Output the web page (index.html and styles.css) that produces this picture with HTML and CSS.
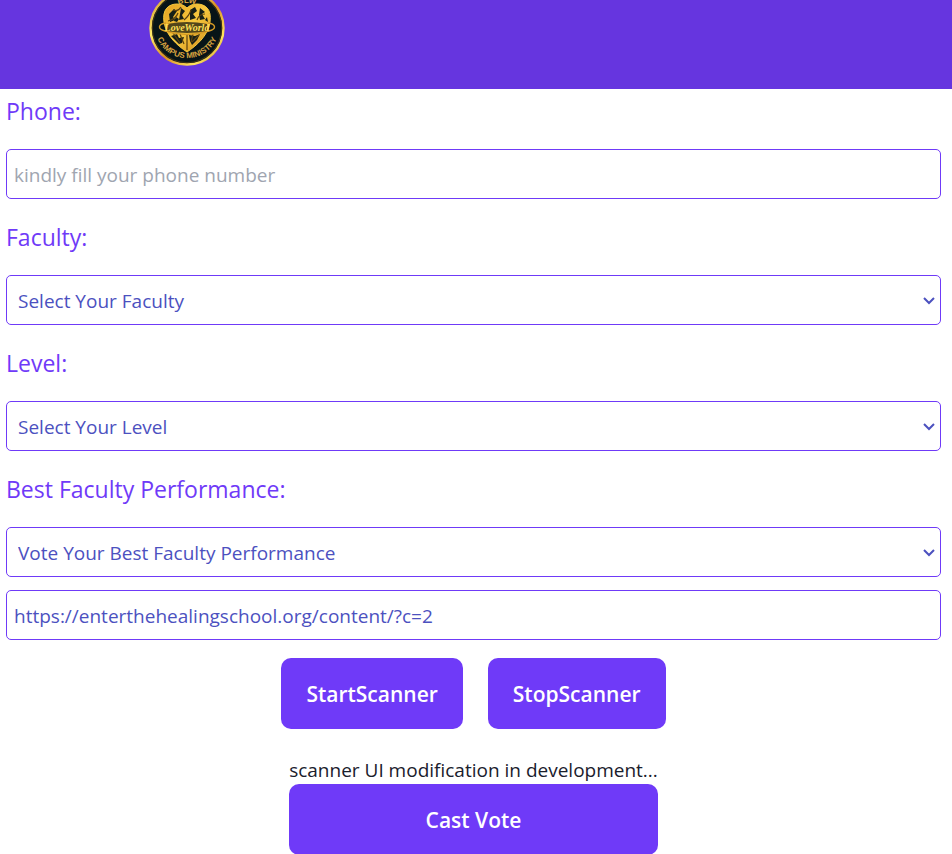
FILE: index.html
```html
<!DOCTYPE html>
<html lang="en">
<head>
<meta charset="utf-8">
<meta name="viewport" content="width=device-width, initial-scale=1">
<title>Cast Vote</title>
<link rel="stylesheet" href="styles.css">
</head>
<body>
<header class="header">
  <svg class="logo" viewBox="0 0 76 76" role="img" aria-label="BLW Campus Ministry">
    <defs>
      <linearGradient id="rim" x1="0" y1="0" x2="1" y2="1">
        <stop offset="0" stop-color="#c98a1c"/>
        <stop offset=".3" stop-color="#ffe96a"/>
        <stop offset=".55" stop-color="#d98e22"/>
        <stop offset=".8" stop-color="#ffe45c"/>
        <stop offset="1" stop-color="#b87518"/>
      </linearGradient>
      <linearGradient id="gold" x1="0" y1="0" x2="1" y2="1">
        <stop offset="0" stop-color="#e5a322"/>
        <stop offset=".5" stop-color="#f6c83e"/>
        <stop offset="1" stop-color="#cf8818"/>
      </linearGradient>
      <path id="lower" d="M6 30A32.500 32.500 0 1 0 70 30"/>
      <path id="upper" d="M13 38A25 25 0 0 1 63 38"/>
    </defs>
    <circle cx="38" cy="38" r="36.500" fill="#071417" stroke="url(#rim)" stroke-width="2.400"/>
    <circle cx="38" cy="38" r="34.600" fill="none" stroke="#6b4b12" stroke-width=".6"/>
    <path d="M38 62C29 56 17 46 15 32C13 19 20 14 28 14C33 14 36 16 38 18C40 16 43 14 48 14C56 14 63 19 61 32C59 46 47 56 38 62Z" fill="url(#gold)" stroke="#f4c83c"/>
    <path d="M20 24l5-5 3 2-4 6 2 3-5 2zM32 18l4 3-3 4 2 4-5 1 1-6zM41 20l5-3 2 4-4 3 3 4-6 2zM51 18l5 4-3 2 3 5-5 1-1-5zM22 46l6-2 2 4 5-1-2 6-3 1zM40 45l6 1 5-2-3 6-5 5-2-4zM27 27l3 2-2 3-3-1zM58 27l1 5-3-2z" fill="#172018"/>
    <path d="M24 20q5 2 8-3M19 31q8-2 10-8M35 30q5-4 7-10M48 30q2-6 8-6M24 43l7 10M31 44l4 10M38 45v15M44 44l-2 8M50 45l-7 7" fill="none" stroke="#59400f" stroke-width="1.200"/>
    <path d="M17 33C9 34 8 39 16 41Q38 48 60 41C68 39 67 34 59 33" fill="none" stroke="#d49a25" stroke-width="1.400"/>
    <path d="M18 34Q38 30 58 34V41Q38 45 18 41Z" fill="#1d1d12" fill-opacity=".75"/>
    <text class="logo-name" x="38" y="41" text-anchor="middle">LoveWorld</text>
    <text class="logo-ring"><textPath href="#upper" startOffset="50%" text-anchor="middle">BLW</textPath></text>
    <text class="logo-ring"><textPath href="#lower" startOffset="50%" text-anchor="middle">CAMPUS MINISTRY</textPath></text>
  </svg>
</header>
<main>
  <form class="form">
    <div class="field">
      <label for="phone">Phone:</label>
      <input class="control" id="phone" type="tel" placeholder="kindly fill your phone number">
    </div>
    <div class="field">
      <label for="faculty">Faculty:</label>
      <div class="select-wrap">
        <select class="control" id="faculty"><option>Select Your Faculty</option></select>
        <svg class="chevron" viewBox="0 0 12 8" aria-hidden="true"><path d="M1 1l5 5 5-5"/></svg>
      </div>
    </div>
    <div class="field">
      <label for="level">Level:</label>
      <div class="select-wrap">
        <select class="control" id="level"><option>Select Your Level</option></select>
        <svg class="chevron" viewBox="0 0 12 8" aria-hidden="true"><path d="M1 1l5 5 5-5"/></svg>
      </div>
    </div>
    <div class="field">
      <label for="performance">Best Faculty Performance:</label>
      <div class="select-wrap">
        <select class="control" id="performance"><option>Vote Your Best Faculty Performance</option></select>
        <svg class="chevron" viewBox="0 0 12 8" aria-hidden="true"><path d="M1 1l5 5 5-5"/></svg>
      </div>
      <input class="control scan-result" type="text" aria-label="Scanned link" value="https://enterthehealingschool.org/content/?c=2">
    </div>
    <div class="actions">
      <div class="scanner-actions">
        <button class="button" type="button">StartScanner</button>
        <button class="button" type="button">StopScanner</button>
      </div>
      <div class="submit">
        <p class="note">scanner UI modification in development...</p>
        <button class="button" type="submit">Cast Vote</button>
      </div>
    </div>
  </form>
</main>
</body>
</html>
```
FILE: styles.css
```css
* {
  box-sizing: border-box;
}

body {
  margin: 0;
  background: #fff;
  color: #1a202c;
  font: 19px/28px "Segoe UI", "Open Sans", sans-serif;
}

.header {
  display: flex;
  overflow: hidden;
  padding: 0 149px 23px;
  background: #6635df;
}

.logo {
  width: 76px;
  height: 76px;
  margin-top: -10px;
}

.logo-name {
  fill: #ffe05a;
  font: italic bold 10px "Liberation Serif", serif;
}

.logo-ring {
  fill: #d9a441;
  font: bold 8px "Liberation Sans", sans-serif;
}

.form {
  padding: 4px 11px 0 6px;
}

.field {
  display: flex;
  flex-direction: column;
}

.field + .field {
  margin-top: 20px;
}

label {
  margin-bottom: 20px;
  color: #6f3af8;
  font-size: 23px;
  line-height: 36px;
}

.control {
  display: block;
  width: 100%;
  height: 50px;
  margin: 0;
  padding: 2px 7px 0;
  border: 1px solid #6f3af8;
  border-radius: 5px;
  background: #fff;
  color: #4c51bf;
  font: inherit;
  appearance: none;
}

.control::placeholder {
  color: #a0a5b0;
  opacity: 1;
}

.select-wrap {
  position: relative;
}

select.control {
  padding: 2px 30px 0 11px;
}

.chevron {
  position: absolute;
  top: 22px;
  right: 6px;
  width: 12px;
  height: 8px;
  fill: none;
  stroke: #4c51bf;
  stroke-width: 2;
  pointer-events: none;
}

.scan-result {
  margin-top: 13px;
}

.actions {
  display: flex;
  flex-direction: column;
  align-items: center;
  gap: 27px;
  margin-top: 18px;
}

.scanner-actions {
  display: flex;
  gap: 25px;
}

.button {
  height: 71px;
  padding: 0 25px;
  border: 0;
  border-radius: 10px;
  background: #6f3af8;
  color: #fff;
  font: 600 21px/32px "Segoe UI", "Open Sans", sans-serif;
}

.submit {
  display: flex;
  flex-direction: column;
}

.note {
  margin: 0;
}
```
